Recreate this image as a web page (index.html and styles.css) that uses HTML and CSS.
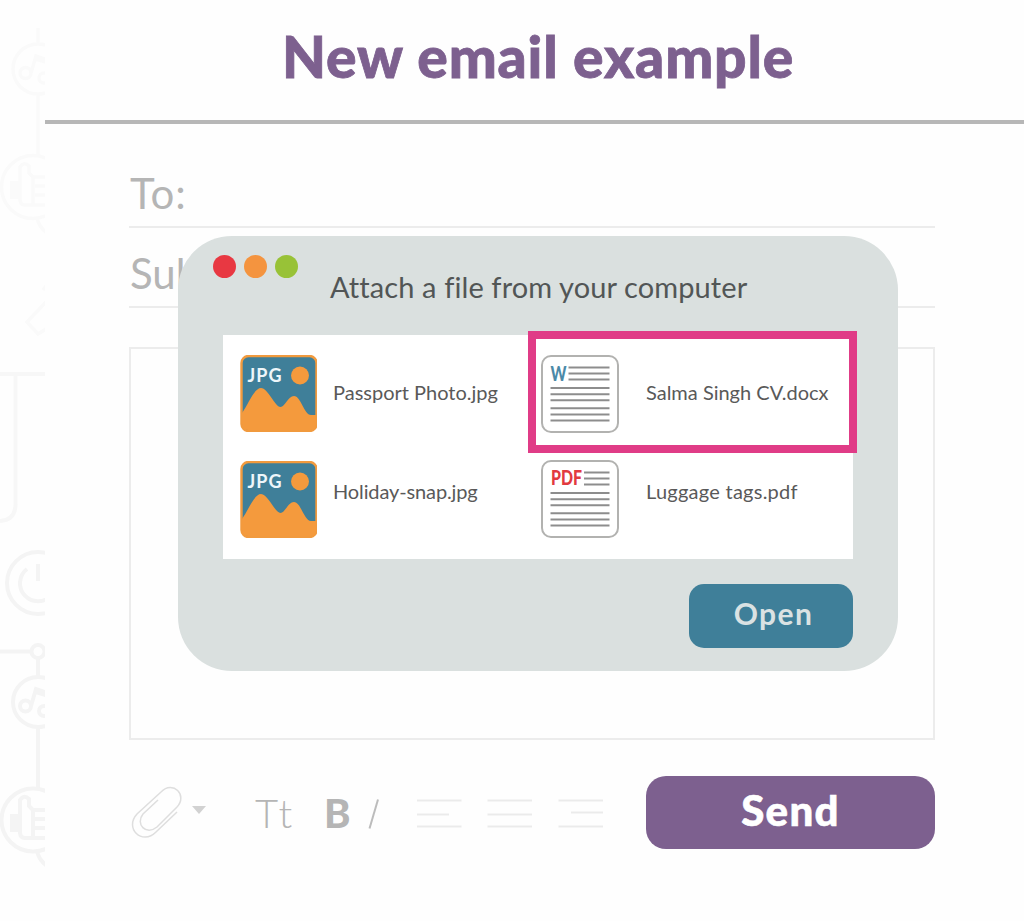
FILE: index.html
```html
<!DOCTYPE html>
<html lang="en">
<head>
<meta charset="utf-8">
<title>New email example</title>
<link rel="stylesheet" href="styles.css">
</head>
<body>
<svg width="0" height="0" class="defs" aria-hidden="true">
  <defs>
    <g id="notes">
      <circle cx="38" cy="0" r="25"/>
      <circle cx="25.500" cy="4" r="5.500"/>
      <path d="M31 4L36 -13L48 -9M36 -10L48 -6"/>
      <circle cx="44" cy="9" r="5"/>
    </g>
    <g id="thumb">
      <circle cx="33" cy="0" r="31.500"/>
      <path d="M20 14V-20Q24 -26 29 -21V-14L33 -10V18H25Q20 18 20 12M33 -10H46M33 18H46M35 -1H46M35 8H46"/>
      <path class="solid" d="M10 -6H19V12H10Z"/>
      <path d="M37 31Q39 40 46 45"/>
    </g>
    <g id="photo">
      <rect x="1.500" y="1" width="75" height="75" rx="7" fill="#3f7f99" stroke="#f19a3e" stroke-width="2.400"/>
      <path d="M2 58C8 50 14 33 21 33C28 33 35 52 40.500 52C45 52 48 41 54 41C61 41 64 60 71 60H76V70Q76 75 71 75H8Q2 75 2 69Z" fill="#f49a3d"/>
      <circle cx="60" cy="20.500" r="9" fill="#f49a3d"/>
      <text x="7.500" y="26.500" textLength="34" class="jpg">JPG</text>
    </g>
    <path id="doclines" d="M9.500 33H68.500M9.500 39.300H68.500M9.500 45.300H68.500M9.500 53.300H68.500M9.500 59.500H68.500M9.500 65.500H68.500"/>
  </defs>
</svg>
<div class="page">
  <aside class="pattern">
    <svg width="45" height="921" viewBox="0 0 45 921">
      <g stroke="#fafafa" fill="none" stroke-width="3.500">
        <path d="M38 28V43M38 95V156"/>
        <use href="#notes" y="69"/>
        <g class="faint"><use href="#thumb" y="187"/></g>
        <path d="M46 302L27 322L38 334L46 329M43 290L46 286"/>
      </g>
      <g stroke="#f7f7f7" fill="none" stroke-width="4">
        <path d="M0 374H46M15.500 375V504Q15.500 520 0 521"/>
      </g>
      <g stroke="#f4f4f4" fill="none" stroke-width="4">
        <circle cx="38" cy="583" r="31"/>
        <path d="M38 564V581M27 569A18 18 0 1 0 49 569"/>
        <path d="M0 651.500H31M38 658V676M38 728V788"/>
        <circle cx="38" cy="651.500" r="6.500"/>
        <use href="#notes" y="702"/>
        <g class="strong"><use href="#thumb" y="820"/></g>
      </g>
    </svg>
  </aside>
  <main class="mail">
    <header class="mail-header"><h1 class="title">New email example</h1></header>
    <section class="compose">
      <div class="field to">To:</div>
      <div class="field subject">Subject:</div>
      <div class="message"></div>
      <div class="toolbar">
        <svg class="clip" width="52" height="54" viewBox="0 0 52 54" fill="none" stroke="#dedede" stroke-width="1.500">
          <path d="M46 26L25 46C11 60 -7 42 6 28L30 6C42 -6 57 9 46 21L26 41C15 50 4 38 12 28L27 14"/>
        </svg>
        <svg class="caret" width="14" height="9" viewBox="0 0 14 9"><path d="M0 0H14L7 8Z" fill="#d2d2d2"/></svg>
        <span class="tool tt">Tt</span>
        <span class="tool bold">B</span>
        <svg class="slash" width="12" height="32" viewBox="0 0 12 32"><path d="M1.500 30.500L10 1.500" stroke="#bcbcbc" stroke-width="2"/></svg>
        <svg class="aligns" width="188" height="32" viewBox="0 0 188 32" stroke="#ebebeb" stroke-width="2">
          <path d="M0 2.500H44.500M0 16.500H32M0 28.500H44.500M70.500 2.500H115M70.500 16.500H115M70.500 28.500H115M141.500 2.500H186M154 14.500H186M141.500 28.500H186"/>
        </svg>
        <button class="send">Send</button>
      </div>
    </section>
  </main>
  <div class="dialog" role="dialog">
    <div class="dialog-head">
      <div class="dots"><i class="dot red"></i><i class="dot orange"></i><i class="dot green"></i></div>
      <h2 class="dialog-title">Attach a file from your computer</h2>
    </div>
    <div class="files">
      <div class="file photo-file">
        <svg width="77" height="77" viewBox="0 0 77 77"><use href="#photo"/></svg>
        <span class="name passport">Passport Photo.jpg</span>
      </div>
      <div class="file selected">
        <svg width="78" height="78" viewBox="0 0 78 78">
          <rect x="1" y="1" width="76" height="76" rx="9" fill="#fff" stroke="#b2b2b0" stroke-width="2"/>
          <g stroke="#8d8d8d" stroke-width="2"><use href="#doclines"/><path d="M27.500 12.500H68.500M27.500 18.500H68.500M27.500 24.500H68.500"/></g>
          <text x="9.500" y="25.500" textLength="16" lengthAdjust="spacingAndGlyphs" class="kind word">W</text>
        </svg>
        <span class="name salma">Salma Singh CV.docx</span>
      </div>
      <div class="file photo-file lower">
        <svg width="77" height="77" viewBox="0 0 77 77"><use href="#photo"/></svg>
        <span class="name holiday">Holiday-snap.jpg</span>
      </div>
      <div class="file doc lower">
        <svg width="78" height="78" viewBox="0 0 78 78">
          <rect x="1" y="1" width="76" height="76" rx="9" fill="#fff" stroke="#b2b2b0" stroke-width="2"/>
          <g stroke="#8d8d8d" stroke-width="2"><use href="#doclines"/><path d="M43 12.500H68.500M43 18.500H68.500M43 24.500H68.500"/></g>
          <text x="10" y="25" textLength="31" lengthAdjust="spacingAndGlyphs" class="kind pdf">PDF</text>
        </svg>
        <span class="name luggage">Luggage tags.pdf</span>
      </div>
    </div>
    <button class="open">Open</button>
  </div>
</div>
</body>
</html>
```
FILE: styles.css
```css
* { box-sizing: border-box; }
body { margin: 0; background: #fefefe; font-family: Lato, "Liberation Sans", sans-serif; }
h1, h2 { margin: 0; white-space: nowrap; }
svg { display: block; flex: none; }
button { border: 0; padding: 0; font-family: inherit; }
.defs { position: absolute; }
.page { position: relative; display: flex; width: 1024px; height: 921px; overflow: hidden; }
.pattern { flex: none; width: 45px; }
.solid { fill: currentColor; stroke: none; }
.faint { color: #fafafa; }
.strong { color: #f4f4f4; }
.mail { flex: 1; }
.mail-header { height: 124px; border-bottom: 4px solid #b7b7b7; padding-left: 237px; }
.title { font-size: 57px; font-weight: 900; line-height: 112px; color: #7d608f; letter-spacing: 0.85px; -webkit-text-stroke: 0.8px #7d608f; }
.compose { width: 806px; margin: 36px 0 0 84px; }
.field { height: 68px; line-height: 67px; font-size: 42px; color: #b5b5b5; border-bottom: 2px solid #ececec; padding-left: 1px; }
.to { letter-spacing: 0.9px; }
.subject { margin-top: 12px; }
.message { height: 393px; margin-top: 39px; border: 2px solid #ececec; }
.toolbar { display: flex; align-items: flex-start; height: 73px; margin-top: 36px; }
.clip { margin: 10px 0 0 2px; }
.caret { margin: 30px 0 0 9px; }
.tool { font-size: 40px; line-height: 75px; }
.tt { margin-left: 49px; width: 69px; font-weight: 300; color: #b5b5b5; letter-spacing: 2.5px; }
.bold { width: 44px; font-weight: 900; color: #b5b5b5; }
.slash { margin-top: 22px; }
.aligns { margin: 22px 0 0 37px; }
.send { margin-left: auto; width: 289px; height: 73px; border-radius: 20px; background: #7d608f; color: #fff; font-size: 42px; font-weight: 900; line-height: 69px; padding-bottom: 4px; letter-spacing: 1.3px; -webkit-text-stroke: 0.6px #fff; }
.dialog { position: absolute; left: 178px; top: 236px; width: 720px; height: 435px; border-radius: 54px; background: #dae0df; padding: 0 45px; }
.dialog-head { display: flex; height: 99px; }
.dots { display: flex; gap: 8px; margin: 19px 0 0 -10px; }
.dot { width: 23px; height: 23px; border-radius: 50%; }
.red { background: #e83842; }
.orange { background: #f4943f; }
.green { background: #98c237; }
.dialog-title { margin-left: 32px; font-size: 29px; font-weight: 400; line-height: 101px; color: #525656; letter-spacing: 0.1px; }
.files { display: grid; grid-template-columns: 305px 325px; grid-template-rows: 112px 112px; height: 224px; background: #fff; }
.file { display: flex; align-items: flex-start; }
.photo-file { padding: 20px 0 0 17px; gap: 16px; }
.photo-file.lower { padding-top: 14px; }
.selected { width: 329px; height: 122px; margin-top: -4px; border: 8px solid #e03c87; padding: 16px 0 0 5px; gap: 27px; background: #fff; }
.doc { padding: 13px 0 0 13px; gap: 27px; }
.name { font-size: 20px; line-height: 75px; color: #595959; white-space: nowrap; }
.lower .name { line-height: 61px; }
.doc.lower .name { line-height: 63px; }
.holiday { letter-spacing: -0.12px; }
.luggage { letter-spacing: 0.25px; }
.jpg { font-size: 18px; font-weight: 700; fill: #eef6fa; }
.kind { font-size: 20px; font-weight: 900; }
.word { fill: #4b8aa8; }
.pdf { fill: #e23a3f; }
.open { display: block; width: 164px; height: 64px; margin: 25px 0 0 auto; border-radius: 15px; background: #3f7f99; color: #dae2e3; font-size: 30px; font-weight: 700; line-height: 59px; padding: 0 0 5px 5px; letter-spacing: 1.4px; }
```
